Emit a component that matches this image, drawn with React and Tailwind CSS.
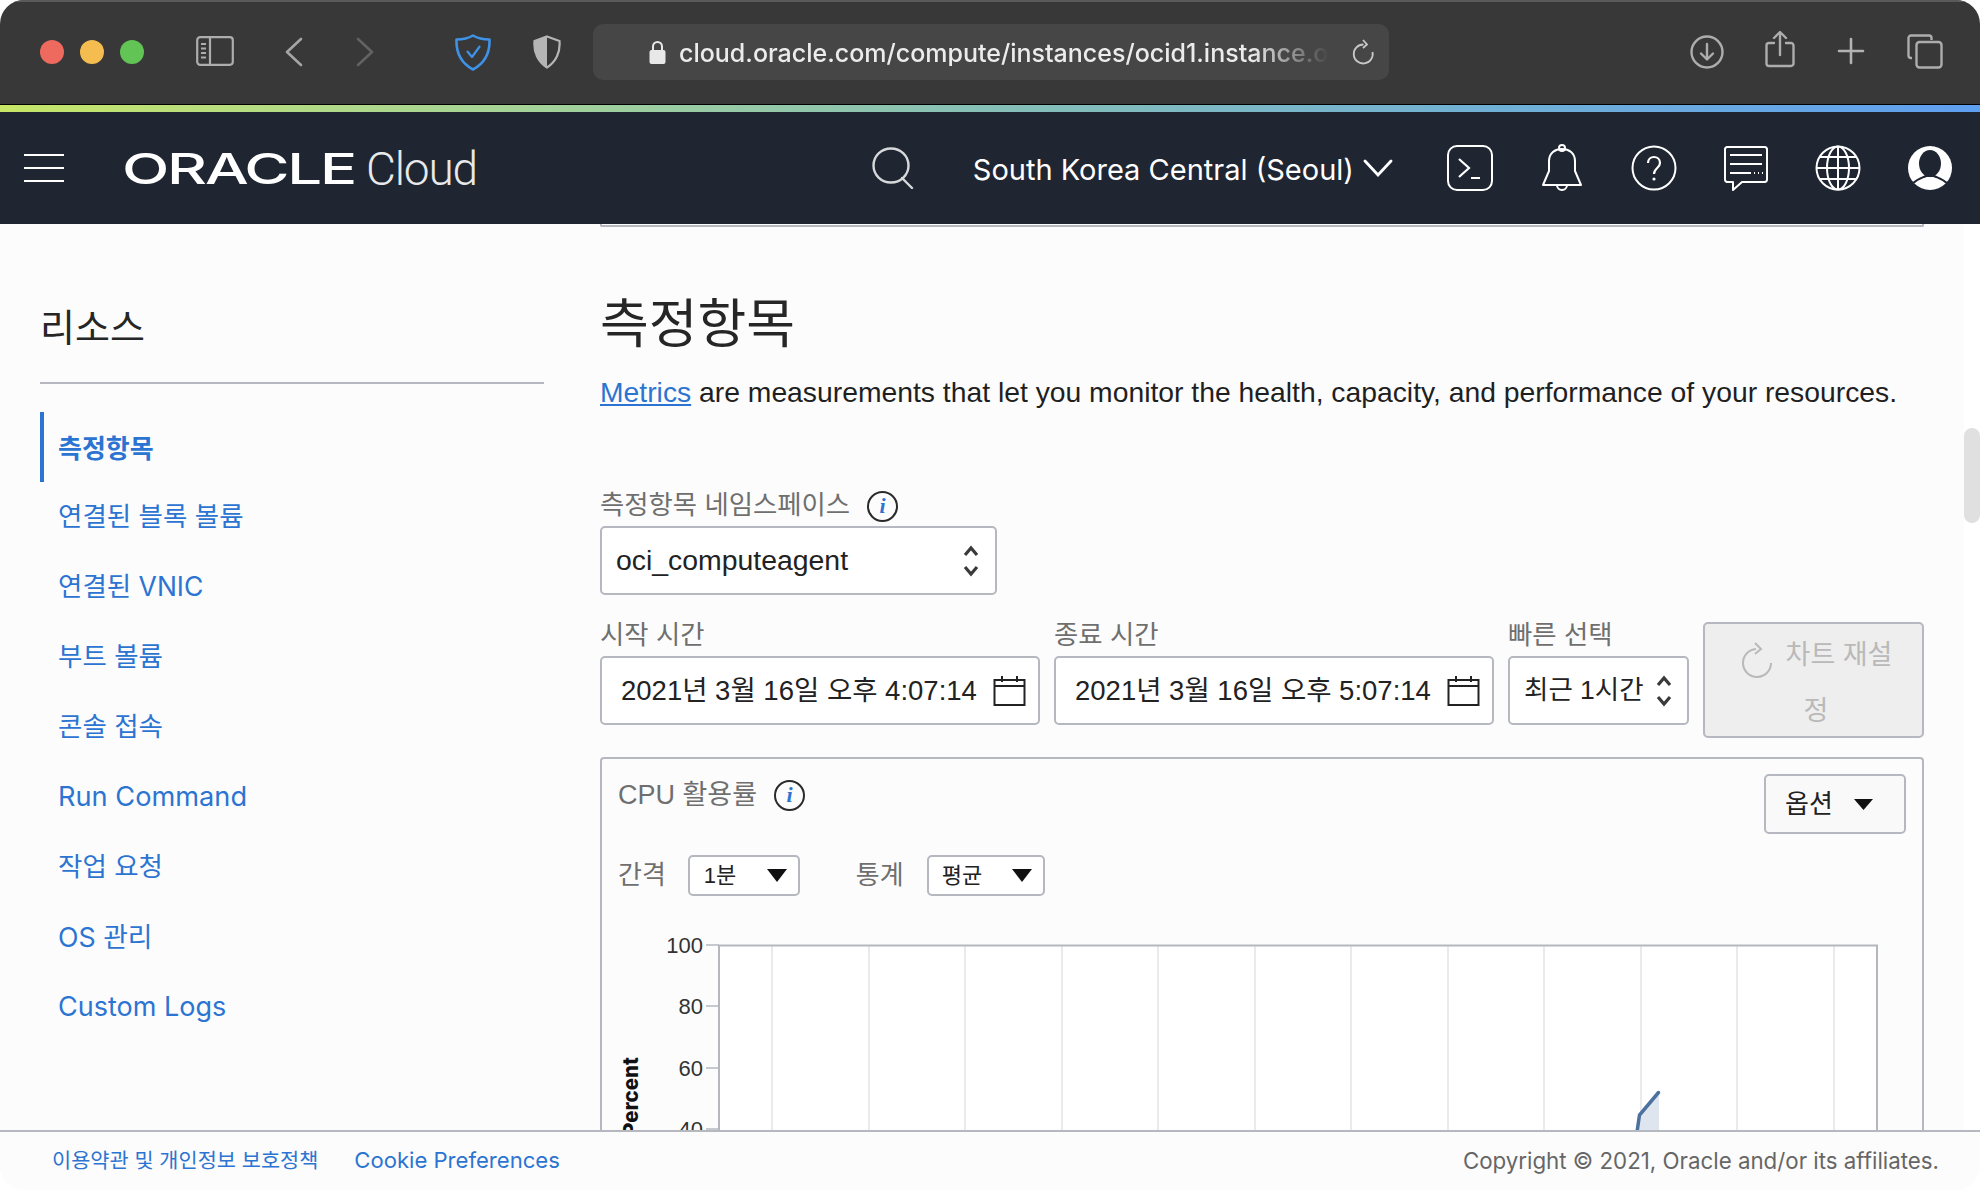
import React from "react";

const KR = '"Liberation Sans","Noto Sans CJK KR",sans-serif';
const navItems = [
  { t: "연결된 블록 볼륨", c: "text-[26.5px]" },
  { t: "연결된 VNIC", c: "text-[26.5px]" },
  { t: "부트 볼륨", c: "text-[26.5px]" },
  { t: "콘솔 접속", c: "text-[26.5px]" },
  { t: "Run Command", c: "text-[27.2px]" },
  { t: "작업 요청", c: "text-[26.5px]" },
  { t: "OS 관리", c: "text-[26.8px]" },
  { t: "Custom Logs", c: "text-[27px]" },
];

function Info({ className = "" }) {
  return (
    <span className={`inline-flex h-[31px] w-[31px] items-center justify-center rounded-full border-2 border-[#2a2a2a] font-['Liberation_Serif'] text-[22px] font-bold italic leading-none text-[#2d74d0] ${className}`}>i</span>
  );
}
function UpDown({ className = "" }) {
  return (
    <svg width="18" height="36" viewBox="0 0 18 36" fill="none" stroke="#3a3a3a" strokeWidth="3.2" className={className}>
      <path d="M3 12 9 5l6 7M3 24l6 7 6-7" />
    </svg>
  );
}
function Cal() {
  return (
    <svg width="33" height="31" viewBox="0 0 33 31" fill="none" stroke="#222" strokeWidth="2">
      <path d="M1.5 5h30v25h-30zM1.5 11h30M9 1v6M24 1v6" />
    </svg>
  );
}
function Caret({ w = 20, h = 13, color = "#111" }) {
  return (
    <svg width={w} height={h} viewBox="0 0 20 13" preserveAspectRatio="none"><path d="M0 0h20L10 13z" fill={color} /></svg>
  );
}

function Chart() {
  const grid = [772,869,965,1062,1158,1255,1351,1448,1544,1641,1737,1834];
  const ticks = [[947,"100"],[1008,"80"],[1070,"60"],[1131,"40"]];
  const ox = 602, oy = 920;
  return (
    <svg width="1320" height="300" viewBox={`${ox} ${oy} 1320 300`} className="block">
      <rect x="719" y="947" width="1158" height="260" fill="#fff" />
      {grid.map((x) => <line key={x} x1={x} x2={x} y1="947" y2="1200" stroke="#e2e3e6" strokeWidth="1.5" />)}
      <path d="M1637 1134 1639.5 1117 1659 1094V1134Z" fill="#dfe5ee" />
      <path d="M1637 1134 1639.5 1117 1658.5 1094.5" fill="none" stroke="#4c719f" strokeWidth="3.5" strokeLinecap="round" />
      <path d="M719 1200V947.5H1877V1200" fill="none" stroke="#b4b8be" strokeWidth="2" />
      {ticks.map(([y, t]) => (
        <g key={t}>
          <line x1="706" x2="719" y1={y} y2={y} stroke="#b4b8be" strokeWidth="1.5" />
          <text x="703" y={y + 8} textAnchor="end" fontSize="22" fill="#333" fontFamily="Liberation Sans, sans-serif">{t}</text>
        </g>
      ))}
      <text transform="translate(638 1138) rotate(-90)" fontSize="20.5" fontWeight="800" fill="#111" fontFamily="Inter, sans-serif">Percent</text>
    </svg>
  );
}

export default function App() {
  return (
    <div className="h-[1190px] w-[1980px] overflow-hidden bg-white" style={{ fontFamily: KR }}>
      <div className="flex h-full flex-col overflow-hidden rounded-[24px]">
        {/* Safari chrome */}
        <div className="flex h-[105px] shrink-0 items-start border-b border-b-black border-t-2 border-t-[#5a5a5a] bg-[#383838]">
          <div className="ml-[40px] mt-[38px] flex gap-[16px]">
            <span className="h-6 w-6 rounded-full bg-[#ee6a5f]" />
            <span className="h-6 w-6 rounded-full bg-[#f5bd4f]" />
            <span className="h-6 w-6 rounded-full bg-[#61c454]" />
          </div>
          <svg className="ml-[52px] mt-[34px]" width="38" height="30" viewBox="0 0 38 30" fill="none" stroke="#adadad" strokeWidth="2.2">
            <rect x="1.2" y="1.2" width="35.6" height="27.6" rx="3" />
            <path d="M14 1.2v27.6" />
            <path d="M5 8h5M5 12.5h5M5 17h5M5 21.5h5" strokeWidth="1.8" />
          </svg>
          <svg className="ml-[51px] mt-[35px]" width="18" height="30" viewBox="0 0 18 30" fill="none" stroke="#a5a5a5" strokeWidth="2.6" strokeLinecap="round" strokeLinejoin="round">
            <path d="M16 2 2 15l14 13" />
          </svg>
          <svg className="ml-[53px] mt-[35px]" width="18" height="30" viewBox="0 0 18 30" fill="none" stroke="#626262" strokeWidth="2.6" strokeLinecap="round" strokeLinejoin="round">
            <path d="M2 2l14 13L2 28" />
          </svg>
          <svg className="ml-[81px] mt-[32px]" width="36" height="37" viewBox="0 0 36 37" fill="none" stroke="#3e92e8" strokeWidth="2.6" strokeLinejoin="round">
            <path d="M18 1.5C23 4.5 28 5.5 34.5 5.5 35 19 30 29 18 35.5 6 29 1 19 1.5 5.5 8 5.5 13 4.5 18 1.5Z" />
            <path d="M12 17l5 6 8-11" strokeWidth="2.2" />
          </svg>
          <svg className="ml-[42px] mt-[33px]" width="28" height="34" viewBox="0 0 28 34">
            <path d="M14 1.5 26.5 6C27.5 17 23 27 14 32.5 5 27 .5 17 1.5 6Z" fill="none" stroke="#b5b5b5" strokeWidth="2.2" />
            <path d="M14 1.5 1.5 6C.5 17 5 27 14 32.5Z" fill="#b5b5b5" />
          </svg>
          <div className="ml-[32px] mt-[22px] flex h-[56px] w-[796px] shrink-0 items-center rounded-[10px] bg-[#464646]">
            <svg className="ml-[56px]" width="17" height="24" viewBox="0 0 17 24">
              <path d="M4 11V6.5a4.5 4.5 0 0 1 9 0V11" fill="none" stroke="#e8e8e8" strokeWidth="2" />
              <rect x="0.5" y="10" width="16" height="14" rx="2" fill="#e8e8e8" />
            </svg>
            <div className="ml-[13px] mt-[2px] w-[650px] whitespace-nowrap text-[25px] font-medium leading-none text-[#ececec] [font-family:Inter,sans-serif] [mask-image:linear-gradient(to_right,#000_88%,transparent_100%)]">
              cloud.oracle.com/compute/instances/ocid1.instance.o
            </div>
            <svg className="ml-[22px]" width="24" height="27" viewBox="0 0 24 27" fill="none" stroke="#c8c8c8" strokeWidth="1.8">
              <path d="M12.5 5.5A9.5 9.5 0 1 0 21.5 13M12 1l4 4.5-4 3.5" />
            </svg>
          </div>
          <svg className="ml-[301px] mt-[33px]" width="34" height="34" viewBox="0 0 34 34" fill="none" stroke="#adadad" strokeWidth="2.4" strokeLinecap="round" strokeLinejoin="round">
            <circle cx="17" cy="17" r="15.5" />
            <path d="M17 9v15M11 18.5l6 6 6-6" />
          </svg>
          <svg className="ml-[41px] mt-[29px]" width="30" height="37" viewBox="0 0 30 37" fill="none" stroke="#adadad" strokeWidth="2.4" strokeLinecap="round" strokeLinejoin="round">
            <path d="M9 12H4a2.5 2.5 0 0 0-2.5 2.5v18A2.5 2.5 0 0 0 4 35h22a2.5 2.5 0 0 0 2.5-2.5v-18A2.5 2.5 0 0 0 26 12h-5" />
            <path d="M15 24V2M9 7l6-6 6 6" />
          </svg>
          <svg className="ml-[42px] mt-[35px]" width="28" height="28" viewBox="0 0 28 28" stroke="#b3b3b3" strokeWidth="2.6" strokeLinecap="round">
            <path d="M14 2v24M2 14h24" />
          </svg>
          <svg className="ml-[42px] mt-[32px]" width="36" height="35" viewBox="0 0 36 35" fill="none" stroke="#adadad" strokeWidth="2.4" strokeLinejoin="round">
            <path d="M5 24H4a2.5 2.5 0 0 1-2.5-2.5V4A2.5 2.5 0 0 1 4 1.5h18A2.5 2.5 0 0 1 24.5 4v2" />
            <rect x="9.5" y="8" width="25" height="25.5" rx="3" />
          </svg>
        </div>
        <div className="h-[7px] shrink-0 bg-gradient-to-r from-[#c6e667] via-[#86bfb6] to-[#5f9ff0]" />

        {/* Oracle nav */}
        <div className="flex h-[112px] shrink-0 items-center bg-[#1f2632] text-white">
          <div className="ml-[24px] flex w-[40px] flex-col gap-[11px]">
            <span className="h-[2px] bg-white" /><span className="h-[2px] bg-white" /><span className="h-[2px] bg-white" />
          </div>
          <span className="ml-[58px] mt-[2px] inline-block w-[230px] origin-left scale-x-[1.47] text-[42px] font-medium leading-none tracking-[-1.5px] [font-family:Inter,sans-serif]">ORACLE</span>
          <span className="ml-[14px] mt-[2px] text-[46px] font-light leading-none tracking-[-1.2px] text-[#e8e9ea] [font-family:Roboto,sans-serif]">Cloud</span>
          <svg className="ml-[395px]" width="42" height="42" viewBox="0 0 42 42" fill="none" stroke="#d6d8da" strokeWidth="2.4" strokeLinecap="round">
            <ellipse cx="19" cy="18.5" rx="17.5" ry="17" />
            <path d="M30 31l10 10" />
          </svg>
          <span className="ml-[59px] mt-[2px] whitespace-nowrap text-[29px] leading-none [font-family:Inter,sans-serif]">South Korea Central (Seoul)</span>
          <svg className="ml-[9px]" width="30" height="18" viewBox="0 0 30 18" fill="none" stroke="#fff" strokeWidth="2.8" strokeLinecap="round">
            <path d="M2 2l13 14L28 2" />
          </svg>
          <svg className="ml-[53px]" width="48" height="48" viewBox="0 0 48 48" fill="none" stroke="#fff" strokeWidth="2">
            <rect x="2" y="2" width="44" height="44" rx="9" />
            <path d="M13 15l10 9-10 9M25 34h9" strokeWidth="2.2" />
          </svg>
          <svg className="ml-[47px]" width="42" height="48" viewBox="0 0 42 48" fill="none" stroke="#fff" strokeWidth="2">
            <path d="M2 41 8 27V17C8 9 14 5 21 5s13 4 13 12v10l6 14Z" strokeLinejoin="round" />
            <circle cx="21" cy="4" r="3" />
            <path d="M16 41a5 5 0 0 0 10 0" />
          </svg>
          <svg className="ml-[48px]" width="46" height="46" viewBox="0 0 46 46" fill="none" stroke="#fff" strokeWidth="2">
            <ellipse cx="23" cy="23" rx="21.5" ry="21.5" />
            <path d="M17 18c0-4 3-6 6-6s6 2 6 6c0 5-6 5-6 11" strokeWidth="2.2" />
            <circle cx="23" cy="34" r="1.6" fill="#fff" stroke="none" />
          </svg>
          <svg className="ml-[46px]" width="46" height="46" viewBox="0 0 46 46" fill="none" stroke="#fff" strokeWidth="2" strokeLinejoin="round">
            <path d="M4 2h38a2.5 2.5 0 0 1 2 2.5v30a2.5 2.5 0 0 1-2 2.5H19l-9 8v-8H4a2.5 2.5 0 0 1-2-2.5v-30A2.5 2.5 0 0 1 4 2Z" />
            <path d="M7 10h32M7 19h32M7 28h21" />
            <path d="M31 28h1M35 28h1M39 28h1" />
          </svg>
          <svg className="ml-[46px]" width="46" height="46" viewBox="0 0 46 46" fill="none" stroke="#fff" strokeWidth="2">
            <circle cx="23" cy="23" r="21.5" />
            <ellipse cx="23" cy="23" rx="11" ry="21.5" />
            <path d="M23 1.5v43M1.5 23h43M5 12h36M5 34h36" />
          </svg>
          <svg className="ml-[46px]" width="46" height="46" viewBox="0 0 46 46">
            <circle cx="23" cy="23" r="22" fill="#fff" />
            <ellipse cx="23" cy="18.5" rx="11" ry="13.5" fill="#1f2632" />
            <path d="M5 39c5-5 10-6 14-8h8c4 2 9 3 14 8" fill="none" stroke="#1f2632" strokeWidth="2" />
          </svg>
        </div>

        {/* Body */}
        <div className="flex min-h-0 flex-1 overflow-hidden bg-white">
          <div className="flex w-[1964px] shrink-0 flex-col bg-[#fcfcfc]">
            <div className="flex min-h-0 flex-1 overflow-hidden">
              {/* Sidebar */}
              <aside className="w-[600px] shrink-0 pl-[40px] pr-[56px] pt-[81px]">
                <h2 className="h-[79px] border-b-2 border-[#b5b8be] text-[38px] leading-[46px] text-[#262626]">리소스</h2>
                <nav className="mt-[28px] [font-family:Inter,'Noto_Sans_CJK_KR',sans-serif]">
                  <a className="flex h-[70px] items-center border-l-4 border-[#2c74d2] pl-[14px] pt-[3px] text-[26px] font-bold text-[#2c74d2]">측정항목</a>
                  {navItems.map((n) => (
                    <a key={n.t} className={`flex h-[70px] items-center pl-[18px] text-[#2c74d2] ${n.c}`}>{n.t}</a>
                  ))}
                </nav>
              </aside>
              {/* Main */}
              <main className="min-w-0 w-[1324px] shrink-0">
                <div className="h-[3px] rounded-b-[2px] border-x-2 border-b-2 border-[#b5b8be]" />
                <h1 className="mt-[65px] text-[53px] font-normal leading-[66px] text-[#262626]">측정항목</h1>
                <p className="mt-[16px] whitespace-nowrap text-[28.3px] leading-[36px] text-[#1f1f1f]">
                  <a className="text-[#2c74d2] underline">Metrics</a> are measurements that let you monitor the health, capacity, and performance of your resources.
                </p>
                <div className="mt-[78px] flex h-[36px] items-center gap-[17px] text-[26.4px] text-[#6f6f6f]">측정항목 네임스페이스<Info /></div>
                <div className="mt-[2px] flex h-[69px] w-[397px] items-center justify-between rounded-[5px] border-2 border-[#b5b8be] bg-white pl-[14px] pr-[15px] text-[28.4px] text-[#222]">
                  oci_computeagent<UpDown />
                </div>
                <div className="flex gap-[14px]">
                  <div className="mt-[24px] w-[440px]">
                    <div className="mb-[4px] h-[33px] text-[26.4px] leading-[33px] text-[#6f6f6f]">시작 시간</div>
                    <div className="flex h-[69px] items-center justify-between rounded-[5px] border-2 border-[#b5b8be] bg-white pl-[19px] pr-[12px] text-[27.5px] text-[#222]">2021년 3월 16일 오후 4:07:14<Cal /></div>
                  </div>
                  <div className="mt-[24px] w-[440px]">
                    <div className="mb-[4px] h-[33px] text-[26.4px] leading-[33px] text-[#6f6f6f]">종료 시간</div>
                    <div className="flex h-[69px] items-center justify-between rounded-[5px] border-2 border-[#b5b8be] bg-white pl-[19px] pr-[12px] text-[27.5px] text-[#222]">2021년 3월 16일 오후 5:07:14<Cal /></div>
                  </div>
                  <div className="mt-[24px] w-[181px]">
                    <div className="mb-[4px] h-[33px] text-[26.4px] leading-[33px] text-[#6f6f6f]">빠른 선택</div>
                    <div className="flex h-[69px] items-center justify-between whitespace-nowrap rounded-[5px] border-2 border-[#b5b8be] bg-white pl-[14px] pr-[14px] text-[26.5px] text-[#222]">최근 1시간<UpDown /></div>
                  </div>
                  <div className="mt-[27px] h-[116px] w-[221px] rounded-[5px] border-2 border-[#b5b8be] bg-[#eeeeee] pl-[33px] pr-[28px] pt-[3px] text-center text-[27px] leading-[56px] text-[#b9b9b9]">
                    <svg className="mb-[-6px] mr-[14px] inline-block" width="32" height="36" viewBox="0 0 32 36" fill="none" stroke="#b9b9b9" strokeWidth="2">
                      <path d="M16 7a14 14 0 1 0 15 14M15 1l6 6-6 5" />
                    </svg>
                    차트 재설정
                  </div>
                </div>
                <div className="mt-[19px] h-[500px] rounded-t-[4px] border-2 border-b-0 border-[#b5b8be]">
                  <div className="flex items-start justify-between pl-[16px] pr-[16px] pt-[15px]">
                    <div className="mt-[3px] flex h-[36px] items-center gap-[17px] text-[27px] text-[#6f6f6f]">CPU 활용률<Info /></div>
                    <div className="flex h-[60px] w-[142px] items-center gap-[21px] rounded-[5px] border-2 border-[#b5b8be] bg-[#f9f9f9] pl-[19px] text-[26px] text-[#222]">옵션<Caret w={19} h={11} /></div>
                  </div>
                  <div className="mt-[21px] flex h-[41px] items-center pl-[16px]">
                    <span className="text-[26px] text-[#6f6f6f]">간격</span>
                    <div className="ml-[22px] flex h-[41px] w-[112px] items-center justify-between rounded-[5px] border-2 border-[#b5b8be] bg-white pl-[14px] pr-[11px] text-[22px] text-[#222]">1분<Caret /></div>
                    <span className="ml-[56px] text-[26px] text-[#6f6f6f]">통계</span>
                    <div className="ml-[23px] flex h-[41px] w-[118px] items-center justify-between rounded-[5px] border-2 border-[#b5b8be] bg-white pl-[13px] pr-[11px] text-[22px] text-[#222]">평균<Caret /></div>
                  </div>
                  <div className="mt-[22px]"><Chart /></div>
                </div>
              </main>
            </div>
          </div>
          <div className="flex flex-1 justify-end pt-[204px]">
            <div className="h-[95px] w-[16px] rounded-[8px] bg-[#e0e0e0]" />
          </div>
        </div>
      </div>
      {/* Footer overlays the full width of the window */}
      <footer className="relative -mt-[60px] flex h-[60px] items-center rounded-b-[24px] border-t-2 border-[#b5b8be] bg-[#fcfcfc] [font-family:Inter,'Noto_Sans_CJK_KR',sans-serif]">
        <a className="ml-[52px] text-[20.8px] text-[#2c74d2]">이용약관 및 개인정보 보호정책</a>
        <a className="ml-[36px] text-[22.1px] text-[#2c74d2]">Cookie Preferences</a>
        <span className="ml-auto mr-[41px] text-[22.3px] text-[#666]">Copyright © 2021, Oracle and/or its affiliates.</span>
      </footer>
    </div>
  );
}
